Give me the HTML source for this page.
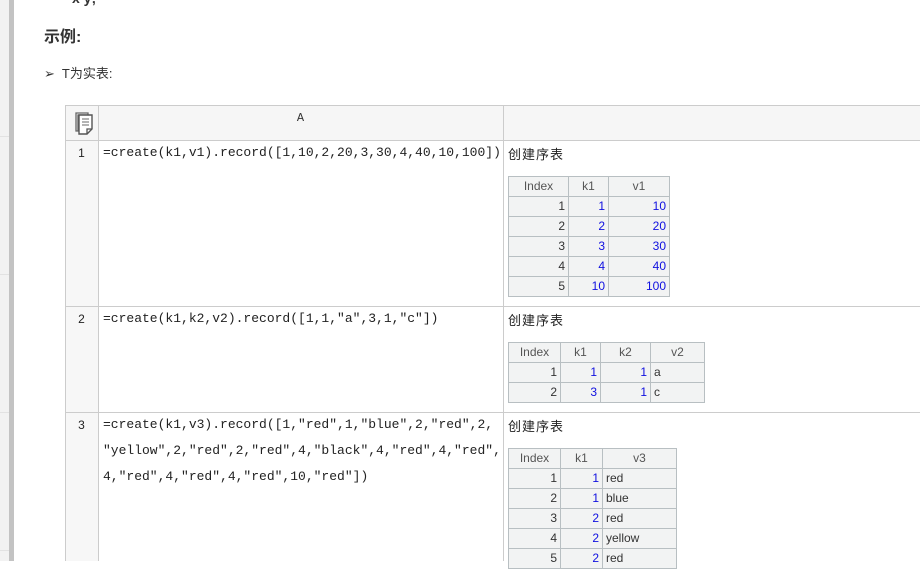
<!DOCTYPE html>
<html><head><meta charset="utf-8"><style>
body{margin:0;width:920px;height:561px;overflow:hidden;background:#fff;position:relative;font-family:"Liberation Sans","Noto Sans CJK SC",sans-serif;}
.a{position:absolute;}
.code{position:absolute;left:103px;font:13px/26px "Liberation Mono",monospace;color:#222;white-space:pre;}
.lbl{position:absolute;left:508px;font-size:13px;color:#222;letter-spacing:1px;}
.rn{position:absolute;left:65px;width:33px;text-align:center;font:12px "Liberation Sans",sans-serif;color:#222;}
table.t{position:absolute;left:508px;border-collapse:collapse;font-size:12px;}
table.t td{border:1px solid #b8bfc2;background:#f2f3f3;height:19px;padding:0 3px;color:#333;line-height:19px;}
table.t tr:first-child td{text-align:center;color:#555;}
td.r{text-align:right;}
td.b{text-align:right;color:#1010e0 !important;}
</style></head><body>
<div class="a" style="left:0;top:0;width:9px;height:561px;background:#f2f2f2"></div>
<div class="a" style="left:0;top:136px;width:9px;height:1px;background:#e2e2e2"></div>
<div class="a" style="left:0;top:274px;width:9px;height:1px;background:#e2e2e2"></div>
<div class="a" style="left:0;top:412px;width:9px;height:1px;background:#e2e2e2"></div>
<div class="a" style="left:0;top:550px;width:9px;height:1px;background:#e2e2e2"></div>
<div class="a" style="left:9px;top:0;width:5px;height:561px;background:#c3c3c3"></div>
<div class="a" style="left:72px;top:-10px;font-size:14px;font-weight:bold;color:#333">x y;</div>
<div class="a" style="left:44px;top:23px;font-size:16px;font-weight:bold;color:#333">示例:</div>
<div class="a" style="left:44px;top:63px;font-size:13px;color:#333">➢&nbsp; T为实表:</div>

<!-- grid -->
<div class="a" style="left:65px;top:105px;width:855px;height:35px;background:#f6f6f6"></div>
<div class="a" style="left:65px;top:140px;width:33px;height:421px;background:#f7f7f7"></div>
<div class="a" style="left:65px;top:105px;width:855px;height:1px;background:#ccc"></div>
<div class="a" style="left:65px;top:140px;width:855px;height:1px;background:#ccc"></div>
<div class="a" style="left:65px;top:306px;width:855px;height:1px;background:#ccc"></div>
<div class="a" style="left:65px;top:412px;width:855px;height:1px;background:#ccc"></div>
<div class="a" style="left:65px;top:105px;width:1px;height:456px;background:#ccc"></div>
<div class="a" style="left:98px;top:105px;width:1px;height:456px;background:#ccc"></div>
<div class="a" style="left:503px;top:105px;width:1px;height:456px;background:#ccc"></div>
<svg class="a" style="left:72px;top:110px" width="24" height="26" viewBox="0 0 24 26">
<path d="M4 3h12v2H6v16H4z" fill="none" stroke="#666" stroke-width="1.3"/>
<path d="M7 5h13v14l-5 5H7z" fill="#fff" stroke="#555" stroke-width="1.4"/>
<path d="M15 24v-5h5" fill="none" stroke="#555" stroke-width="1.3"/>
<path d="M10 9h7M10 12h7M10 15h7" stroke="#888" stroke-width="1.3"/>
</svg>
<div class="a" style="left:98px;top:111px;width:405px;text-align:center;font:12px 'Liberation Mono',monospace;color:#333">A</div>

<div class="rn" style="top:146px">1</div>
<div class="rn" style="top:312px">2</div>
<div class="rn" style="top:418px">3</div>

<div class="code" style="top:140px">=create(k1,v1).record([1,10,2,20,3,30,4,40,10,100])</div>
<div class="code" style="top:306px">=create(k1,k2,v2).record([1,1,"a",3,1,"c"])</div>
<div class="code" style="top:412px">=create(k1,v3).record([1,"red",1,"blue",2,"red",2,
"yellow",2,"red",2,"red",4,"black",4,"red",4,"red",
4,"red",4,"red",4,"red",10,"red"])</div>

<div class="lbl" style="top:144px">创建序表</div>
<div class="lbl" style="top:310px">创建序表</div>
<div class="lbl" style="top:416px">创建序表</div>

<table class="t" style="top:176px">
<tr><td style="width:53px">Index</td><td style="width:33px">k1</td><td style="width:54px">v1</td></tr>
<tr><td class="r">1</td><td class="b">1</td><td class="b">10</td></tr>
<tr><td class="r">2</td><td class="b">2</td><td class="b">20</td></tr>
<tr><td class="r">3</td><td class="b">3</td><td class="b">30</td></tr>
<tr><td class="r">4</td><td class="b">4</td><td class="b">40</td></tr>
<tr><td class="r">5</td><td class="b">10</td><td class="b">100</td></tr>
</table>
<table class="t" style="top:342px">
<tr><td style="width:45px">Index</td><td style="width:33px">k1</td><td style="width:43px">k2</td><td style="width:47px">v2</td></tr>
<tr><td class="r">1</td><td class="b">1</td><td class="b">1</td><td>a</td></tr>
<tr><td class="r">2</td><td class="b">3</td><td class="b">1</td><td>c</td></tr>
</table>
<table class="t" style="top:448px">
<tr><td style="width:45px">Index</td><td style="width:35px">k1</td><td style="width:67px">v3</td></tr>
<tr><td class="r">1</td><td class="b">1</td><td>red</td></tr>
<tr><td class="r">2</td><td class="b">1</td><td>blue</td></tr>
<tr><td class="r">3</td><td class="b">2</td><td>red</td></tr>
<tr><td class="r">4</td><td class="b">2</td><td>yellow</td></tr>
<tr><td class="r">5</td><td class="b">2</td><td>red</td></tr>
</table>
</body></html>
